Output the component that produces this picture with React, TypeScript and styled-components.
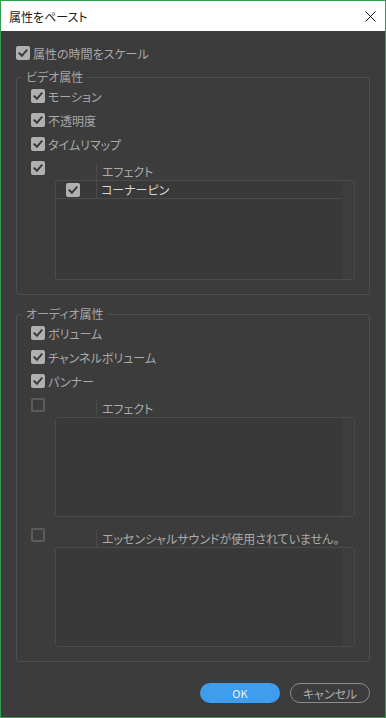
import React from 'react';
import styled, { createGlobalStyle } from 'styled-components';

const Global = createGlobalStyle`
  html, body { margin: 0; padding: 0; background: #3c3c3c; }
  body { font-family: "Noto Sans CJK JP", "Noto Sans", sans-serif; }
  * { box-sizing: border-box; }
`;

const Window = styled.div`
  width: 386px;
  height: 718px;
  border: 1px solid #2f9f52;
  display: flex;
  flex-direction: column;
  background: #3c3c3c;
  overflow: hidden;
  font-feature-settings: "palt";
`;

const TitleBar = styled.div`
  height: 30px;
  flex: none;
  background: #ffffff;
  display: flex;
  align-items: center;
  justify-content: space-between;
  padding: 0 9px 0 8px;
  font-size: 12px;
  color: #1a1a1a;
`;

const CloseButton = styled.div`
  width: 12px;
  height: 12px;
  display: flex;
  align-items: center;
  justify-content: center;
`;

const Body = styled.div`
  flex: 1;
  display: flex;
  flex-direction: column;
  padding: 10px 15px 0 15px;
`;

const Row = styled.div`
  height: 24px;
  display: flex;
  align-items: center;
  gap: 3px;
  font-size: 12px;
  color: #a9a9a9;
`;

const Box = styled.span<{ $checked: boolean }>`
  width: 14px;
  height: 14px;
  flex: none;
  border-radius: 2px;
  display: flex;
  align-items: center;
  justify-content: center;
  background: ${(p) => (p.$checked ? '#b0b0b0' : 'transparent')};
  border: ${(p) => (p.$checked ? 'none' : '2px solid #5b5b5b')};
`;

const Group = styled.fieldset<{ $top: number }>`
  margin: ${(p) => p.$top}px 0 0 0;
  padding: 0;
  border: 1px solid #4f4f4f;
  border-radius: 3px;
  min-width: 0;
`;

const Legend = styled.legend`
  margin-left: 5px;
  padding: 0 4px;
  font-size: 12px;
  line-height: 14px;
  color: #a4a4a4;
`;

const GroupContent = styled.div`
  padding: 0 14px 14px 14px;
  display: flex;
  flex-direction: column;
`;

const EffectHeader = styled.div<{ $gap?: number }>`
  height: 24px;
  display: flex;
  margin-top: ${(p) => p.$gap ?? 0}px;
`;

const HeaderCells = styled.div`
  align-self: flex-end;
  margin-left: 10px;
  height: 17px;
  display: flex;
`;

const HeaderSpacer = styled.div`
  width: 41px;
`;

const HeaderLabel = styled.div`
  border-left: 1px solid #4a4a4a;
  padding-left: 5px;
  font-size: 12px;
  line-height: 17px;
  color: #ababab;
  white-space: nowrap;
`;

const TreeBox = styled.div`
  margin-left: 24px;
  width: 300px;
  height: 100px;
  border: 1px solid #4b4b4b;
  border-radius: 3px;
  display: flex;
  overflow: hidden;
  background: #393939;
`;

const TreeList = styled.div`
  flex: 1;
  display: flex;
  flex-direction: column;
`;

const ScrollStrip = styled.div`
  width: 12px;
  background: #3d3d3d;
`;

const TreeRow = styled.div`
  height: 18px;
  display: flex;
  align-items: center;
  border-bottom: 1px solid #4a4a4a;
`;

const CheckCell = styled.div`
  width: 40px;
  height: 100%;
  display: flex;
  align-items: center;
  padding-left: 10px;
`;

const NameCell = styled.div`
  height: 100%;
  border-left: 1px solid #4a4a4a;
  padding-left: 4px;
  display: flex;
  align-items: center;
  font-size: 12px;
  color: #d6d6d6;
`;

const CheckboxSlot = styled.div`
  align-self: flex-start;
  margin-top: 5px;
`;

const Footer = styled.div`
  margin-top: 21px;
  display: flex;
  justify-content: flex-end;
  gap: 10px;
`;

const Button = styled.button<{ $primary?: boolean }>`
  width: 80px;
  height: 20px;
  border-radius: 10px;
  padding: 0;
  display: flex;
  align-items: center;
  justify-content: center;
  font-family: "Noto Sans CJK JP", "Noto Sans", sans-serif;
  font-feature-settings: "palt";
  font-size: ${(p) => (p.$primary ? '11px' : '12px')};
  background: ${(p) => (p.$primary ? '#3f9ded' : 'transparent')};
  color: ${(p) => (p.$primary ? '#eaf4fd' : '#adadad')};
  border: ${(p) => (p.$primary ? 'none' : '1px solid #8c8c8c')};
`;

const Checkbox: React.FC<{ checked?: boolean }> = ({ checked = false }) => (
  <Box $checked={checked}>
    {checked && (
      <svg width="14" height="14" viewBox="0 0 14 14">
        <path d="M3.4 7.3 L5.9 9.8 L10.6 4.4" fill="none" stroke="#3a3a3a" strokeWidth="2" strokeLinecap="square" />
      </svg>
    )}
  </Box>
);

const Item: React.FC<{ label: string; checked?: boolean }> = ({ label, checked = true }) => (
  <Row>
    <Checkbox checked={checked} />
    <span>{label}</span>
  </Row>
);

const EffectSection: React.FC<{ title: string; checked: boolean; rows?: string[]; gap?: number }> = ({
  title,
  checked,
  rows = [],
  gap,
}) => (
  <>
    <EffectHeader $gap={gap}>
      <CheckboxSlot>
        <Checkbox checked={checked} />
      </CheckboxSlot>
      <HeaderCells>
        <HeaderSpacer />
        <HeaderLabel>{title}</HeaderLabel>
      </HeaderCells>
    </EffectHeader>
    <TreeBox>
      <TreeList>
        {rows.map((r) => (
          <TreeRow key={r}>
            <CheckCell>
              <Checkbox checked />
            </CheckCell>
            <NameCell>{r}</NameCell>
          </TreeRow>
        ))}
      </TreeList>
      <ScrollStrip />
    </TreeBox>
  </>
);

export default function App() {
  return (
    <>
      <Global />
      <Window>
        <TitleBar>
          <span>属性をペースト</span>
          <CloseButton>
            <svg width="11" height="11" viewBox="0 0 11 11">
              <path d="M0.5 0.5 L10.5 10.5 M10.5 0.5 L0.5 10.5" stroke="#111" strokeWidth="1" fill="none" />
            </svg>
          </CloseButton>
        </TitleBar>
        <Body>
          <Item label="属性の時間をスケール" />
          <Group $top={5}>
            <Legend>ビデオ属性</Legend>
            <GroupContent>
              <Item label="モーション" />
              <Item label="不透明度" />
              <Item label="タイムリマップ" />
              <EffectSection title="エフェクト" checked rows={['コーナーピン']} />
            </GroupContent>
          </Group>
          <Group $top={12}>
            <Legend>オーディオ属性</Legend>
            <GroupContent>
              <Item label="ボリューム" />
              <Item label="チャンネルボリューム" />
              <Item label="パンナー" />
              <EffectSection title="エフェクト" checked={false} />
              <EffectSection title="エッセンシャルサウンドが使用されていません。" checked={false} gap={6} />
            </GroupContent>
          </Group>
          <Footer>
            <Button $primary>OK</Button>
            <Button>キャンセル</Button>
          </Footer>
        </Body>
      </Window>
    </>
  );
}
